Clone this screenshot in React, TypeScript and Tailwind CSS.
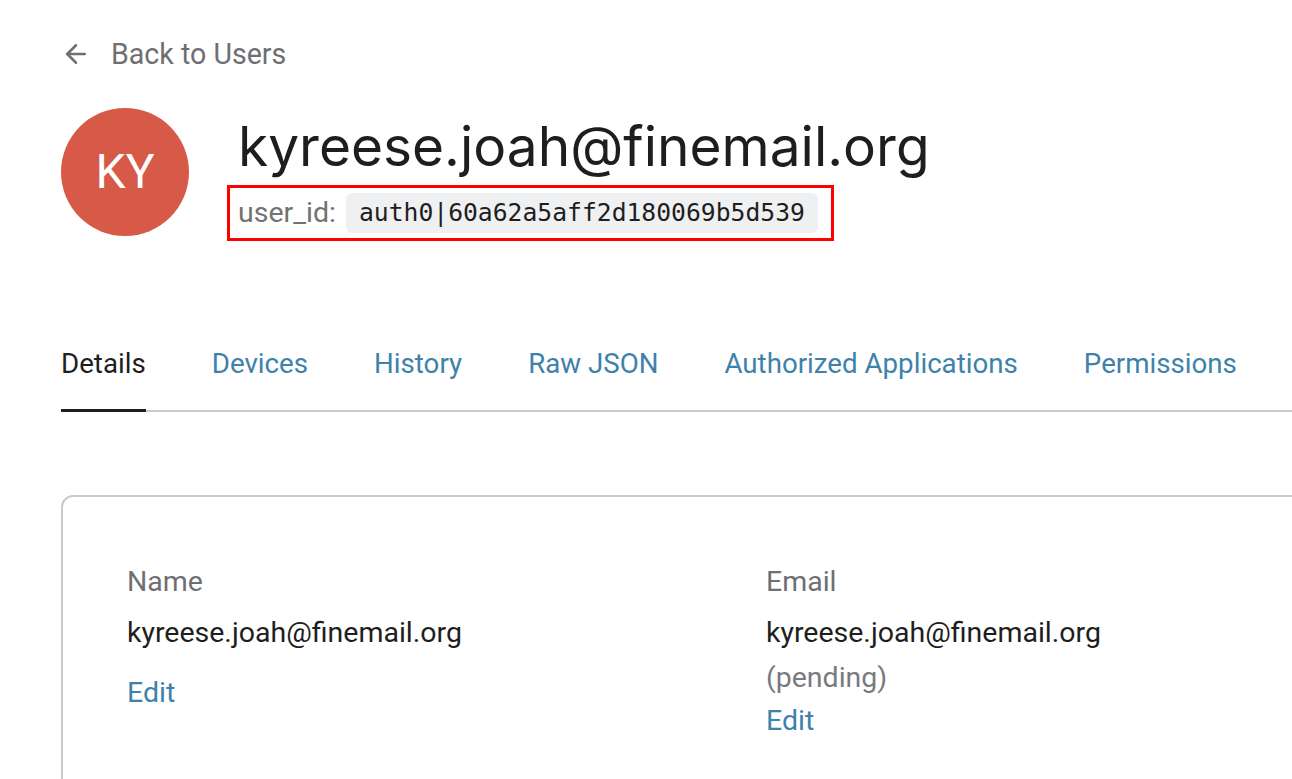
import { ArrowLeft } from "lucide-react";

const tabs = ["Details", "Devices", "History", "Raw JSON", "Authorized Applications", "Permissions"];

export default function App() {
  return (
    <div className="h-[779px] w-[1292px] overflow-hidden bg-white font-['Roboto',sans-serif]">
      <div className="ml-[61px] w-[1300px]">
        {/* back link */}
        <div className="flex h-[108px] items-start pt-[38px]">
          <a className="flex items-center gap-[20px] text-[28.6px] leading-[32px] text-[#6f6f73]">
            <ArrowLeft size={30} strokeWidth={2} className="text-[#6f6f73]" />
            <span>Back to Users</span>
          </a>
        </div>

        {/* header */}
        <div className="flex items-start gap-[49px]">
          <div className="flex h-[128px] w-[128px] items-center justify-center rounded-full bg-[#d65a47] text-[48px] text-white">
            KY
          </div>
          <div className="-ml-[11px] flex flex-col">
            <h1 className="pl-[11px] pt-[4px] font-['Inter',sans-serif] text-[55px] leading-[68px] text-[#1e1e21]">
              kyreese.joah@finemail.org
            </h1>
            <div className="mt-[5px] flex h-[56px] w-[607px] items-center border-[3px] border-[#ff0000] pl-[8px]">
              <span className="text-[28.5px] text-[#727272]">user_id:</span>
              <code className="ml-[10px] rounded-[6px] bg-[#eff0f2] px-[13px] py-[4px] font-['DejaVu_Sans_Mono',monospace] text-[24.7px] leading-[32px] text-[#1e1e21]">
                auth0|60a62a5aff2d180069b5d539
              </code>
            </div>
          </div>
        </div>

        {/* tabs */}
        <div className="mt-[107px] flex gap-[66px] border-b-2 border-[#c9c9ce] text-[27.7px] leading-[32px]">
          {tabs.map((t, i) => (
            <div
              key={t}
              className={
                i === 0
                  ? "-mb-[2px] border-b-[3px] border-[#1e1e21] pb-[29px] text-[#1e1e21]"
                  : "pb-[30px] text-[#3e82ab]"
              }
            >
              {t}
            </div>
          ))}
        </div>

        {/* details card */}
        <div className="mt-[83px] h-[320px] rounded-[12px] border-2 border-[#c9c9ce] pl-[64px] pt-[69px] text-[28.5px]">
          <div className="flex">
            <div className="w-[639px]">
              <div className="leading-[32px] text-[#6f6f73]">Name</div>
              <div className="mt-[19px] leading-[32px] text-[#1e1e21]">kyreese.joah@finemail.org</div>
              <div className="mt-[28px] leading-[32px] text-[#3e82ab]">Edit</div>
            </div>
            <div>
              <div className="leading-[32px] text-[#6f6f73]">Email</div>
              <div className="mt-[19px] leading-[32px] text-[#1e1e21]">kyreese.joah@finemail.org</div>
              <div className="mt-[13px] leading-[32px] text-[#7a7a7e]">(pending)</div>
              <div className="mt-[11px] leading-[32px] text-[#3e82ab]">Edit</div>
            </div>
          </div>
        </div>
      </div>
    </div>
  );
}
